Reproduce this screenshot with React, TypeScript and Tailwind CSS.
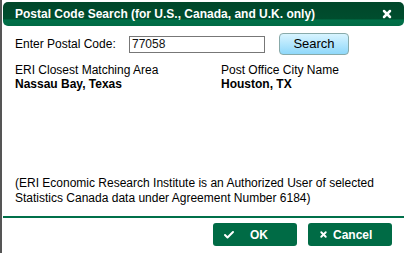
import { Check, X } from 'lucide-react';

const App = () => {
	return (
		<div className="w-[405px] h-[253px] bg-white border-l-2 border-[#555] font-['Liberation_Sans',Arial,sans-serif] text-[12px] text-black flex flex-col overflow-hidden">
			<div className="mx-[1px] mt-[2px] h-[24px] rounded-[5px] bg-[linear-gradient(#00472a_0%,#004d2e_70%,#007048_75%,#006a44_100%)] flex items-center justify-between pl-[12px] pr-[11px]">
				<span className="text-white font-bold text-[12px]">
					Postal Code Search (for U.S., Canada, and U.K. only)
				</span>
				<X className="text-white" size={12} strokeWidth={5} />
			</div>

			<div className="flex items-center pl-[13px] mt-[7px] h-[22px]">
				<span className="w-[114px]">Enter Postal Code:</span>
				<div className="w-[136px] h-[17px] border border-[#777] flex items-center px-[2px] text-[#111]">
					77058
				</div>
				<button className="ml-[14px] w-[70px] h-[22px] rounded-[4px] border border-[#8aa] bg-[linear-gradient(#d8f4ff,#8fd8fa)] text-[13px]">
					Search
				</button>
			</div>

			<div className="grid grid-cols-[206px_1fr] pl-[13px] mt-[8px] leading-[14px]">
				<div>
					<div>ERI Closest Matching Area</div>
					<div className="font-bold">Nassau Bay, Texas</div>
				</div>
				<div>
					<div>Post Office City Name</div>
					<div className="font-bold">Houston, TX</div>
				</div>
			</div>

			<div className="pl-[13px] mt-[85px] leading-[15px]">
				(ERI Economic Research Institute is an Authorized User of selected
				<br />
				Statistics Canada data under Agreement Number 6184)
			</div>

			<div className="mx-[1px] mt-[10px] h-[2px] bg-[#00704a]" />

			<div className="flex justify-end gap-[11px] pr-[13px] mt-[5px]">
				<button className="w-[84px] h-[23px] rounded-[3px] bg-[#006b45] text-white font-bold text-[12px] flex items-center pl-[10px]">
					<Check size={12} strokeWidth={4} />
					<span className="ml-[15px]">OK</span>
				</button>
				<button className="w-[84px] h-[23px] rounded-[3px] bg-[#006b45] text-white font-bold text-[12px] flex items-center pl-[11px]">
					<X size={9} strokeWidth={5} />
					<span className="ml-[5px]">Cancel</span>
				</button>
			</div>
		</div>
	);
};

export default App;
